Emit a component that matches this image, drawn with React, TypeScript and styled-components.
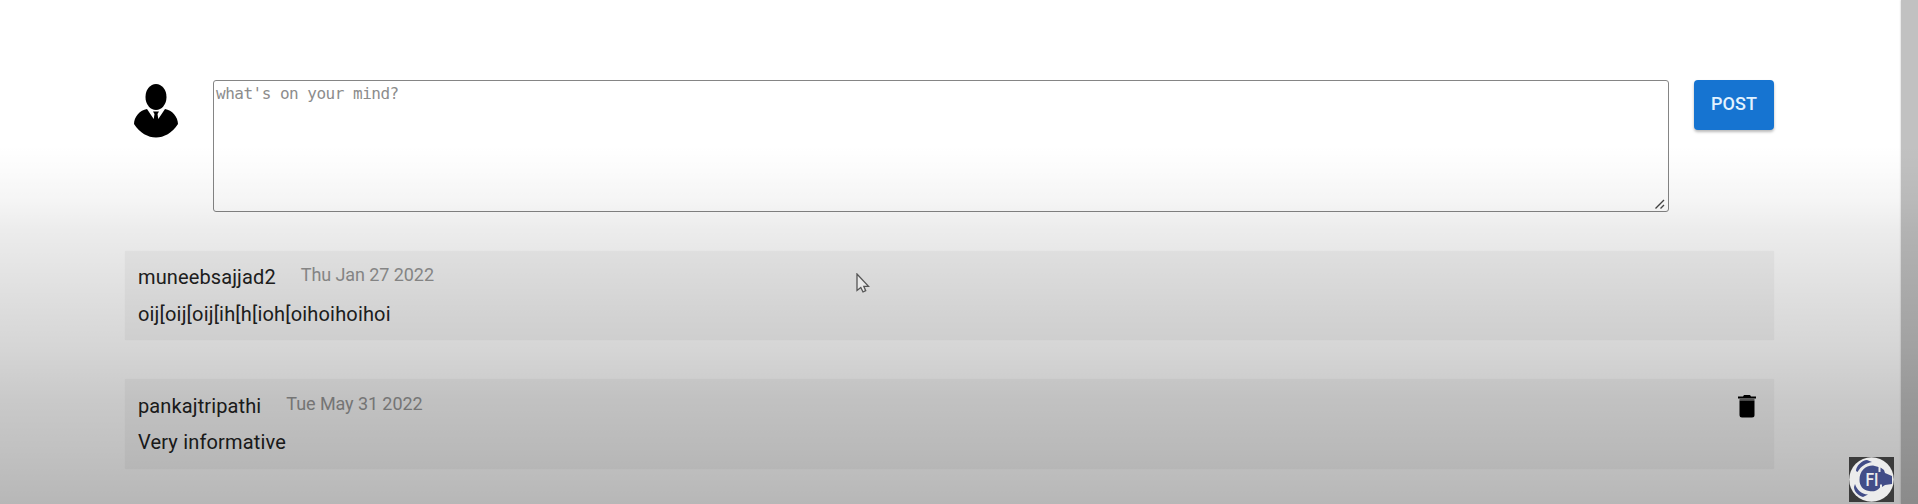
import React from "react";
import styled, { createGlobalStyle } from "styled-components";

const GlobalStyle = createGlobalStyle`
  * { box-sizing: border-box; }
  body { margin: 0; background: #fff; font-family: Roboto, sans-serif; overflow: hidden; }
`;

const Screen = styled.div`
  position: relative;
  display: flex;
  height: 504px;
  overflow: hidden;
`;

const Page = styled.main`
  flex: 1;
  min-width: 0;
  padding: 80px 127px 0 125px;
`;

const ScrollTrack = styled.div`
  width: 17px;
  background: #c1c1c1;
  box-shadow: 0 0 2px #c1c1c1;
`;

const Composer = styled.form`
  display: flex;
  align-items: flex-start;
  height: 171px;
`;

const Avatar = styled.svg`
  width: 46px;
  height: 55px;
  margin: 3px 34px 0 8px;
  flex: none;
`;

const MessageField = styled.div`
  position: relative;
  display: flex;
  flex: 1;
`;

const Message = styled.textarea`
  flex: 1;
  height: 132px;
  padding: 3px 2px;
  border: 1px solid #858585;
  border-radius: 3px;
  background: #fff;
  font: 16px/19px "DejaVu Sans Mono", monospace;
  letter-spacing: -0.5px;
  resize: none;
  outline: none;
  &::placeholder { color: #8c8c8c; opacity: 1; }
`;

const ResizeGrip = styled.svg`
  position: absolute;
  right: 4px;
  bottom: 3px;
`;

const PostButton = styled.button`
  width: 80px;
  height: 50px;
  margin-left: 25px;
  padding: 0 0 2px;
  border: 0;
  border-radius: 4px;
  background: #1674d1;
  color: #e2f2ff;
  font: 500 18px/24px Roboto, sans-serif;
  box-shadow: 0 2px 3px rgba(0, 0, 0, 0.28);
`;

const Comments = styled.section`
  display: flex;
  flex-direction: column;
  gap: 39px;
`;

const Card = styled.article<{ $own: boolean }>`
  display: flex;
  justify-content: space-between;
  height: ${(p) => (p.$own ? 90 : 89)}px;
  padding: ${(p) => (p.$own ? 15 : 14)}px 17px 0 13px;
  background: #f5f5f5;
  box-shadow: 0 0 2px #f8f8f8;
`;

const Heading = styled.header<{ $own: boolean }>`
  display: flex;
  gap: 25px;
  height: ${(p) => (p.$own ? 36 : 37)}px;
`;

const Author = styled.span`
  font-size: 20px;
  line-height: 25px;
  color: #222;
  letter-spacing: 0.12px;
`;

const PostedOn = styled.time`
  font-size: 18px;
  line-height: 20px;
  color: #949494;
  letter-spacing: -0.08px;
`;

const Body = styled.p`
  margin: 0;
  font-size: 20px;
  line-height: 25px;
  color: #222;
  letter-spacing: 0.17px;
`;

const DeleteButton = styled.button`
  width: 20px;
  height: 24px;
  padding: 0;
  border: 0;
  background: none;
  svg { display: block; }
`;

const Shade = styled.div`
  position: absolute;
  inset: 0;
  pointer-events: none;
  background: linear-gradient(
    rgba(0, 0, 0, 0) 145px,
    rgba(0, 0, 0, 0.012) 165px,
    rgba(0, 0, 0, 0.04) 200px,
    rgba(0, 0, 0, 0.075) 230px,
    rgba(0, 0, 0, 0.13) 300px,
    rgba(0, 0, 0, 0.165) 350px,
    rgba(0, 0, 0, 0.21) 400px,
    rgba(0, 0, 0, 0.245) 450px,
    rgba(0, 0, 0, 0.282) 504px
  );
`;

const Pointer = styled.svg`
  position: absolute;
  left: 856px;
  top: 273px;
`;

const ChannelBadge = styled.svg`
  position: absolute;
  left: 1849px;
  top: 457px;
`;

const comments = [
  { author: "muneebsajjad2", date: "Thu Jan 27 2022", text: "oij[oij[oij[ih[h[ioh[oihoihoihoi", own: false },
  { author: "pankajtripathi", date: "Tue May 31 2022", text: "Very informative", own: true },
];

export default function App() {
  return (
    <Screen>
      <GlobalStyle />
      <Page>
        <Composer onSubmit={(e) => e.preventDefault()}>
          <Avatar viewBox="0 0 46 55">
            <ellipse cx="23" cy="14" rx="10.5" ry="13" />
            <path d="M14 26 C7 27 1 34 1 41 C7 50 15 54.500 23 54.500 S39 50 45 41 C45 34 39 27 32 26 L25.300 36 24.500 31 26 28.500 H20 L21.500 31 20.700 36Z" />
          </Avatar>
          <MessageField>
            <Message placeholder="what's on your mind?" spellCheck={false} />
            <ResizeGrip width="10" height="10" viewBox="0 0 10 10">
              <path d="M0.500 9.500L9 1M5.500 9.500L9 6" stroke="#444" strokeWidth="1.400" />
            </ResizeGrip>
          </MessageField>
          <PostButton>POST</PostButton>
        </Composer>
        <Comments>
          {comments.map((c) => (
            <Card key={c.author} $own={c.own}>
              <div>
                <Heading $own={c.own}>
                  <Author>{c.author}</Author>
                  <PostedOn>{c.date}</PostedOn>
                </Heading>
                <Body>{c.text}</Body>
              </div>
              {c.own && (
                <DeleteButton aria-label="Delete comment">
                  <svg width="20" height="24" viewBox="0 0 20 24">
                    <path d="M1 2.500H6L7 1H13L14 2.500H19V4.500H1Z" />
                    <path d="M2.500 4.500H17.500V6.500H2.500Z" fill="#6b6b6b" />
                    <path d="M2.500 6.500H17.500V21Q17.500 23.500 15 23.500H5Q2.500 23.500 2.500 21Z" />
                  </svg>
                </DeleteButton>
              )}
            </Card>
          ))}
        </Comments>
      </Page>
      <ScrollTrack />
      <Shade />
      <Pointer width="14" height="21" viewBox="0 0 14 21">
        <path d="M1 1V17.500L4.800 14.500 7 19 9.700 17.700 7.800 13.300H12.500Z" fill="#e8e8e8" stroke="#555" strokeWidth="1.300" />
      </Pointer>
      <ChannelBadge width="45" height="45" viewBox="0 0 45 45">
        <rect width="45" height="45" fill="#3b3b3b" />
        <circle cx="22.500" cy="22.500" r="22.300" fill="#ececec" />
        <path d="M7 14C7 9 13 3 18 3L23 5C17 6 12 9 8.500 15Z" fill="#424d88" />
        <path d="M6 27C8 33 12 37 19 37.500L14 40C8 38 5 34 5 30Z" fill="#424d88" />
        <path d="M10.500 23C10.500 14 16 8.500 24 8.500L29.500 10V15H31.500V10.500L35 13 36 16 43 19V27L36 28 33 30V27.500H31V30.500C28 34 24 35 20 34C14 33 10.500 29 10.500 23Z" fill="#424d88" />
        <text x="16.500" y="28.500" fill="#ececec" fontFamily="Roboto, sans-serif" fontSize="18" fontWeight="500" textLength="13" lengthAdjust="spacingAndGlyphs">FI</text>
      </ChannelBadge>
    </Screen>
  );
}
